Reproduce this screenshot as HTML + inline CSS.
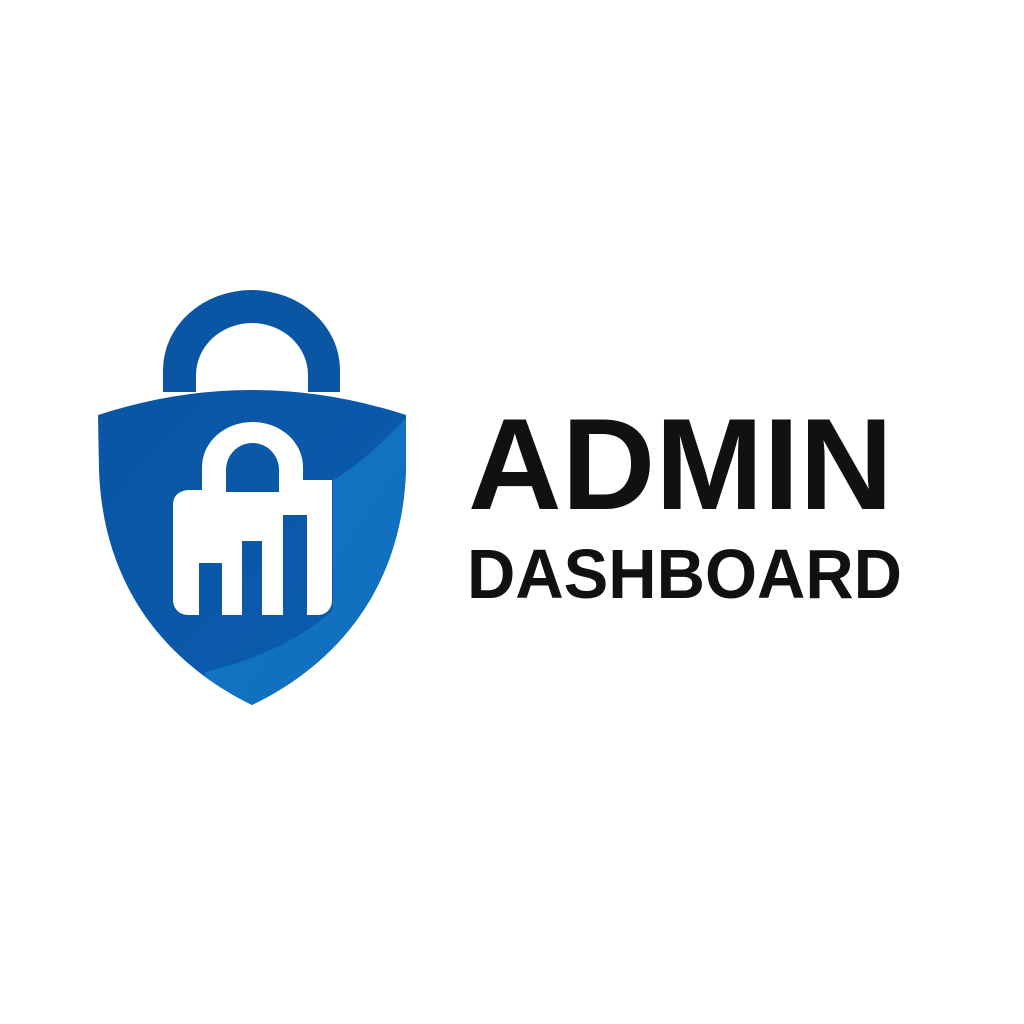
<!DOCTYPE html>
<html><head><meta charset="utf-8"><style>html,body{margin:0;padding:0;background:#fff}svg{display:block}</style></head>
<body>
<svg width="1024" height="1024" viewBox="0 0 1024 1024" xmlns="http://www.w3.org/2000/svg">
<defs>
<linearGradient id="g" x1="0" y1="0" x2="1" y2="1">
<stop offset="0" stop-color="#0a55a4"/><stop offset="1" stop-color="#0b5cae"/>
</linearGradient>
<linearGradient id="l" x1="0" y1="0" x2="1" y2="1">
<stop offset="0" stop-color="#1478c8"/><stop offset="1" stop-color="#0f6cbc"/>
</linearGradient>
<clipPath id="sh"><path d="M98,415 Q252,365 406,415 L406,470 C402,590 335,665 252,705 C170,665 103,590 99,470 Z"/></clipPath>
</defs>
<path d="M163,392 L163,370 A88.5,80 0 0 1 340,370 L340,392 L308,392 L308,375 A56,52 0 0 0 196,375 L196,392 Z" fill="#0a56a5"/>
<g clip-path="url(#sh)">
<rect x="90" y="360" width="330" height="360" fill="url(#g)"/>
<path d="M420,405 L406,418 C385,440 360,465 333,480 L333,610 C300,640 255,660 205,672 L205,720 L420,720 Z" fill="url(#l)"/>
</g>
<path d="M202,480 L202,467 A50.5,45 0 0 1 303,467 L303,480 L332,480 L332,600 C332,610 325,615 318,615 L307,615 L307,515 L283,515 L283,615 L262,615 L262,541 L242,541 L242,615 L222,615 L222,563 L199,563 L199,615 L188,615 C179,615 173,608 173,600 L173,505 C173,495 180,490 190,490 L202,490 Z M226,492 L279,492 L279,470 A26.5,27 0 0 0 226,470 Z" fill="#fff" fill-rule="evenodd"/>
<text x="468" y="509" font-family="Liberation Sans, Arial, sans-serif" font-weight="bold" font-size="130" fill="#111" textLength="425" lengthAdjust="spacingAndGlyphs">ADMIN</text>
<text x="467" y="598" font-family="Liberation Sans, Arial, sans-serif" font-weight="bold" font-size="70" fill="#111" textLength="435" lengthAdjust="spacingAndGlyphs">DASHBOARD</text>
</svg>
</body></html>
